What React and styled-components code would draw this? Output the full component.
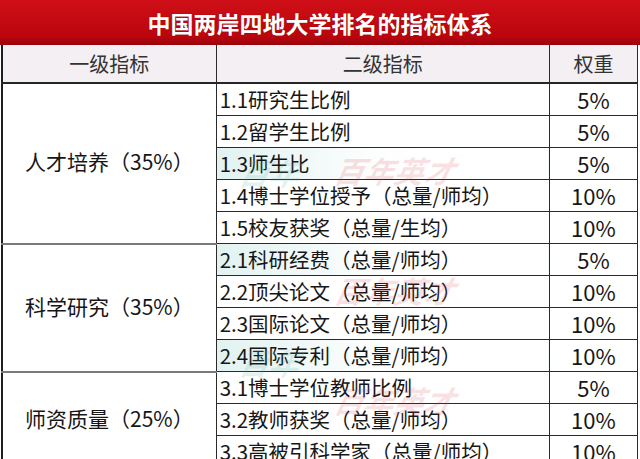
import React from 'react';
import styled, { createGlobalStyle } from 'styled-components';

const GlobalStyle = createGlobalStyle`
  html, body {
    margin: 0;
    padding: 0;
    background: #ffffff;
  }
  body {
    font-family: "Noto Sans CJK SC", "Noto Sans", sans-serif;
  }
`;

const Page = styled.div`
  width: 640px;
  height: 459px;
  overflow: hidden;
  position: relative;
  background: #fff;
`;

const TitleBar = styled.div`
  height: 45px;
  display: flex;
  align-items: center;
  justify-content: center;
  background: linear-gradient(#cf0f17, #bb050e 80%, #9a040b);
  color: #fff;
  font-size: 23px;
  font-weight: 700;
  text-shadow: 0 0 1px rgba(80, 0, 0, 0.6);
`;

const Table = styled.table`
  margin-left: 1px;
  width: 637px;
  table-layout: fixed;
  border-collapse: collapse;
  border-left: 2px solid #1e1e1e;
  color: #161616;
  font-size: 20.5px;
`;

const HeadCell = styled.th`
  height: 37px;
  padding: 0;
  background: #f3eff3;
  color: #333;
  font-weight: 400;
  font-size: 20px;
  text-align: center;
  border-right: 1px solid #2a2a2a;
  border-bottom: 2px solid #262626;
`;

const GroupCell = styled.td`
  padding: 0 0 4px 0;
  font-size: 21px;
  text-align: center;
  vertical-align: middle;
  border-right: 1px solid #2a2a2a;
  border-bottom: 2px solid #7a7a7a;
  white-space: nowrap;
`;

const ItemCell = styled.td`
  height: 31px;
  padding: 0 0 0 3px;
  text-align: left;
  white-space: nowrap;
  line-height: 31px;
  border-right: 1px solid #2a2a2a;
  border-bottom: 1px solid #2a2a2a;
  background: ${(p) =>
    p.$tint ? 'linear-gradient(90deg, rgba(200, 232, 228, 0.55), rgba(230, 244, 242, 0.15) 45%, transparent 60%)' : 'transparent'};
`;

const WeightCell = styled.td`
  height: 31px;
  padding: 0;
  font-size: 22px;
  text-align: center;
  line-height: 31px;
  border-right: 1px solid #2a2a2a;
  border-bottom: 1px solid #2a2a2a;
`;

const Watermark = styled.span`
  position: absolute;
  left: ${(p) => p.$x}px;
  top: ${(p) => p.$y}px;
  font-size: 30px;
  font-weight: 700;
  font-style: italic;
  color: ${(p) => (p.$teal ? 'rgba(80, 175, 160, 0.16)' : 'rgba(220, 60, 70, 0.16)')};
  transform: skewX(-12deg);
  pointer-events: none;
  white-space: nowrap;
`;

const groups = [
  {
    name: '人才培养（35%）',
    items: [
      ['1.1研究生比例', '5%'],
      ['1.2留学生比例', '5%'],
      ['1.3师生比', '5%', true],
      ['1.4博士学位授予（总量/师均）', '10%'],
      ['1.5校友获奖（总量/生均）', '10%'],
    ],
  },
  {
    name: '科学研究（35%）',
    items: [
      ['2.1科研经费（总量/师均）', '5%', true],
      ['2.2顶尖论文（总量/师均）', '10%'],
      ['2.3国际论文（总量/师均）', '10%'],
      ['2.4国际专利（总量/师均）', '10%', true],
    ],
  },
  {
    name: '师资质量（25%）',
    items: [
      ['3.1博士学位教师比例', '5%'],
      ['3.2教师获奖（总量/师均）', '10%'],
      ['3.3高被引科学家（总量/师均）', '10%'],
    ],
  },
];

export default function App() {
  return (
    <Page>
      <GlobalStyle />
      <TitleBar>中国两岸四地大学排名的指标体系</TitleBar>
      <Table>
        <colgroup>
          <col style={{ width: 214 }} />
          <col style={{ width: 333 }} />
          <col style={{ width: 88 }} />
        </colgroup>
        <thead>
          <tr>
            <HeadCell>一级指标</HeadCell>
            <HeadCell>二级指标</HeadCell>
            <HeadCell>权重</HeadCell>
          </tr>
        </thead>
        <tbody>
          {groups.map((g) =>
            g.items.map(([label, weight, tint], i) => (
              <tr key={label}>
                {i === 0 && <GroupCell rowSpan={g.items.length}>{g.name}</GroupCell>}
                <ItemCell $tint={tint}>{label}</ItemCell>
                <WeightCell>{weight}</WeightCell>
              </tr>
            ))
          )}
        </tbody>
      </Table>
      <Watermark $x={335} $y={148}>百年英才</Watermark>
      <Watermark $x={240} $y={150} $teal>百年</Watermark>
      <Watermark $x={335} $y={268}>百年英才</Watermark>
      <Watermark $x={240} $y={340} $teal>百年</Watermark>
      <Watermark $x={335} $y={378}>百年英才</Watermark>
    </Page>
  );
}
